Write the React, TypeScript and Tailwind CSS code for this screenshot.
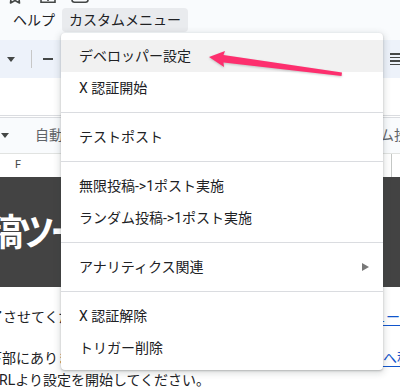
const items: (string | null)[] = [
  "デベロッパー設定",
  "X 認証開始",
  null,
  "テストポスト",
  null,
  "無限投稿->1ポスト実施",
  "ランダム投稿->1ポスト実施",
  null,
  "アナリティクス関連",
  null,
  "X 認証解除",
  "トリガー削除",
];

function Caret() {
  return (
    <svg width="8" height="5" viewBox="0 0 8 5">
      <path d="M0 0h8L4 5z" fill="#444746" />
    </svg>
  );
}

function TopIcons() {
  // only the lower edge of the sheet's title icons is left in view
  return (
    <svg width="100" height="8" viewBox="0 0 100 8">
      <path d="M11.5 -6 L10.5 3 L15 0.5 L19.5 3 L18.5 -6" fill="none" stroke="#444746" strokeWidth="1.6" strokeLinejoin="round" />
      <path d="M41 -6 V2.2 H55 V-6" fill="none" stroke="#444746" strokeWidth="1.6" />
      <path d="M48 -4 V1" stroke="#444746" strokeWidth="1.6" />
      <path d="M72 -6 V0 Q72 2.2 74.5 2.2 H85.5 Q88 2.2 88 0 V-6" fill="none" stroke="#444746" strokeWidth="1.6" />
    </svg>
  );
}

function Menu() {
  return (
    <div className="absolute left-[61px] top-[33px] w-[322px] rounded-[4px] bg-white pt-[7px] pb-[6px] shadow-[0_2px_6px_2px_rgba(60,64,67,0.15),0_1px_2px_0_rgba(60,64,67,0.3)]">
      {items.map((label, i) =>
        label === null ? (
          <div key={i} className="my-2 h-px bg-[#dadce0]" />
        ) : (
          <div
            key={i}
            className={`flex h-8 items-center pl-[18px] pr-[14px] text-[14px] text-[#202124] ${i === 0 ? "bg-[#f1f1f1]" : ""}`}
          >
            <span>{label}</span>
            {label === "アナリティクス関連" && (
              <svg className="ml-auto" width="7" height="8" viewBox="0 0 7 8">
                <path d="M0 0L7 4L0 8z" fill="#787878" />
              </svg>
            )}
          </div>
        )
      )}
    </div>
  );
}

function Arrow() {
  return (
    <svg
      className="pointer-events-none absolute left-0 top-0 drop-shadow-[0_1px_1px_rgba(0,0,0,0.2)]"
      width="400"
      height="389"
      viewBox="0 0 400 389"
    >
      <polygon
        points="209,57 225,51 223.5,55 342,72.5 341.5,76 223.5,62.5 224,67"
        fill="#fd2f6e"
      />
    </svg>
  );
}

export default function App() {
  return (
    <div className="relative h-[389px] w-[400px] overflow-hidden bg-white font-['Roboto','Noto_Sans_CJK_JP',sans-serif] text-[#202124]">
      {/* title bar + menus */}
      <div className="bg-[#f9fbfd]">
        <div className="h-2 overflow-hidden">
          <TopIcons />
        </div>
        <div className="flex h-6 items-center pl-[13px] text-[14px] text-[#202124]">
          <span>ヘルプ</span>
          <span className="ml-[7px] flex h-6 items-center rounded-[4px] bg-[#e9ebee] px-[7px]">
            カスタムメニュー
          </span>
        </div>
        <div className="h-2" />
      </div>

      {/* toolbar */}
      <div className="flex h-[38px] items-center bg-[#edf2fa]">
        <span className="ml-[7px] flex">
          <Caret />
        </span>
        <span className="ml-[16px] h-[18px] w-px bg-[#c7c7c7]" />
        <span className="ml-[11px] h-[2px] w-[10px] bg-[#444746]" />
        <span className="flex-1" />
        <span className="h-[18px] w-px bg-[#c7c7c7]" />
        <span className="ml-[11px] flex flex-col gap-[2px]">
          <span className="h-[1.5px] w-[10px] bg-[#444746]" />
          <span className="h-[1.5px] w-[10px] bg-[#444746]" />
          <span className="h-[1.5px] w-[10px] bg-[#444746]" />
          <span className="h-[1.5px] w-[10px] bg-[#444746]" />
        </span>
      </div>

      {/* formula bar */}
      <div className="h-[37px] bg-white" />
      <div className="h-[3px] border-y border-[#dadce0] bg-white" />

      {/* second row */}
      <div className="flex h-[35px] items-center bg-[#f9fbfd] text-[14px] text-[#5f6368]">
        <span className="ml-[1px] flex">
          <Caret />
        </span>
        <span className="ml-[26px]">自動</span>
        <span className="flex-1" />
        <span className="mr-[-8px] whitespace-nowrap">ランダム投</span>
      </div>

      {/* column header */}
      <div className="flex h-[24px] items-center border-t border-[#e1e3e1] bg-white text-[11px] text-[#444746]">
        <span className="ml-[15px]">F</span>
        <span className="flex-1" />
        <span className="mr-[8px] h-full w-px bg-[#c4c7c5]" />
      </div>

      {/* dark title cell */}
      <div className="flex h-[110px] items-center overflow-hidden bg-[#434343]">
        <span className="ml-[-14px] whitespace-nowrap pt-[4px] text-[37px] font-bold tracking-[-5px] text-white">
          稿ツール
        </span>
      </div>

      {/* text below */}
      <div className="text-[14px] leading-[22px] text-[#202124]">
        <div className="flex pt-[19px]">
          <span className="ml-[-11px] whitespace-nowrap">了させてください。</span>
          <span className="flex-1" />
          <span className="whitespace-nowrap text-[#1155cc] underline underline-offset-[3px]">メニュー</span>
        </div>
        <div className="mt-[19px] flex">
          <span className="ml-[-12px] whitespace-nowrap">下部にあります</span>
          <span className="flex-1" />
          <span className="mr-[-11px] whitespace-nowrap text-[#1155cc] underline underline-offset-[3px]">ページへ移</span>
        </div>
        <div className="flex">
          <span className="ml-[-10px] whitespace-nowrap">URLより設定を開始してください。</span>
        </div>
      </div>

      <Menu />
      <Arrow />
    </div>
  );
}
